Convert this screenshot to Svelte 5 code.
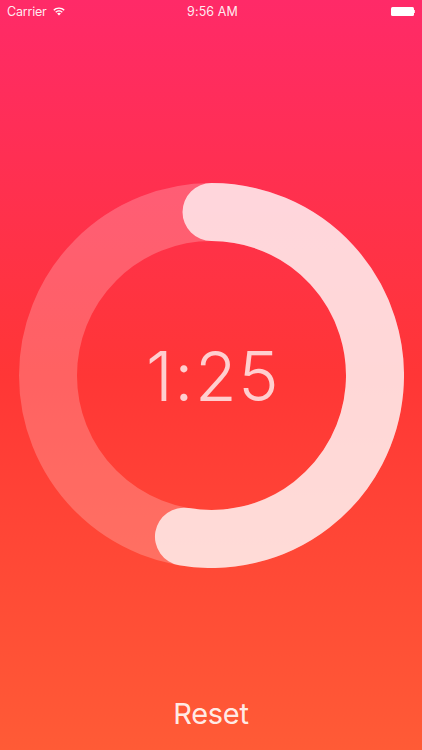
<script>
  const cx = 192.5
  const cy = 192.5
  const r = 163.5
  const endAngle = (189.7 * Math.PI) / 180
  const endX = cx + r * Math.sin(endAngle)
  const endY = cy - r * Math.cos(endAngle)
  const arc = `M ${cx} ${cy - r} A ${r} ${r} 0 1 1 ${endX} ${endY}`
</script>

<div class="screen">
  <header class="status">
    <div class="left">
      <span>Carrier</span>
      <svg class="wifi" width="12" height="9" viewBox="0 0 14 10" fill="white">
        <path d="M7 0.3C4.4 0.3 2.1 1.3 0.4 3L1.5 4.2C2.9 2.8 4.9 1.9 7 1.9S11.1 2.8 12.5 4.2L13.6 3C11.9 1.3 9.6 0.3 7 0.3Z" />
        <path d="M7 3.4C5.3 3.4 3.8 4.1 2.6 5.2L3.7 6.4C4.6 5.6 5.7 5 7 5S9.4 5.6 10.3 6.4L11.4 5.2C10.2 4.1 8.7 3.4 7 3.4Z" />
        <path d="M7 6.4C6.1 6.4 5.4 6.7 4.8 7.3L7 9.7L9.2 7.3C8.6 6.7 7.9 6.4 7 6.4Z" />
      </svg>
    </div>
    <span class="time">9:56 AM</span>
    <div class="battery">
      <div class="cell"></div>
      <div class="nub"></div>
    </div>
  </header>

  <main class="timer">
    <svg class="ring" width="385" height="385" viewBox="0 0 385 385" fill="none">
      <circle {cx} {cy} {r} stroke="white" stroke-opacity="0.22" stroke-width="58" />
      <path d={arc} stroke="white" stroke-opacity="0.75" stroke-width="58" stroke-linecap="round" />
    </svg>
    <div class="count">1:25</div>
  </main>

  <button class="reset">Reset</button>
</div>

<style>
  :global(body) {
    margin: 0;
  }

  .screen {
    width: 422px;
    height: 750px;
    display: flex;
    flex-direction: column;
    align-items: center;
    overflow: hidden;
    background: linear-gradient(180deg, #ff2a68 0%, #ff3636 50%, #ff5b36 100%);
    color: white;
    font-family: Inter, Roboto, sans-serif;
  }

  .status {
    box-sizing: border-box;
    width: 100%;
    height: 22px;
    padding: 0 7px;
    display: grid;
    grid-template-columns: 1fr auto 1fr;
    align-items: center;
    font-size: 12.5px;
    color: rgba(255, 255, 255, 0.92);
  }

  .left {
    display: flex;
    align-items: center;
    gap: 6px;
    letter-spacing: -0.2px;
  }

  .time {
    margin-left: 3px;
    font-size: 12.5px;
    letter-spacing: 0.1px;
  }

  .battery {
    display: flex;
    align-items: center;
    justify-self: end;
  }

  .cell {
    width: 23px;
    height: 9px;
    background: white;
    border-radius: 1.5px;
  }

  .nub {
    width: 1.5px;
    height: 3px;
    background: rgba(255, 255, 255, 0.8);
  }

  .timer {
    margin-top: 161px;
    margin-left: 1px;
    display: grid;
    place-items: center;
  }

  .ring,
  .count {
    grid-area: 1 / 1;
  }

  .ring {
    display: block;
  }

  .count {
    padding-left: 3px;
    font-size: 68px;
    font-weight: 300;
    letter-spacing: 1.5px;
    color: rgba(255, 255, 255, 0.76);
    line-height: 1;
  }

  .reset {
    margin-top: 128px;
    padding: 0;
    border: none;
    background: none;
    font: inherit;
    font-size: 29px;
    font-weight: 400;
    letter-spacing: -0.3px;
    color: rgba(255, 255, 255, 0.9);
    line-height: 36px;
  }
</style>
